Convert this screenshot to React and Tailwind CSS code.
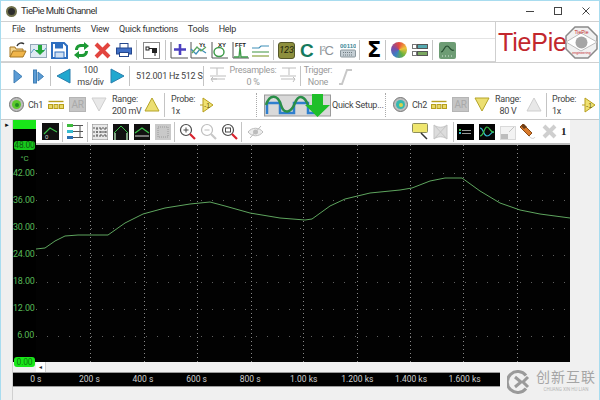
import React from 'react';

const FONT = "font-['Roboto','Liberation_Sans',sans-serif]";

function Sep({ ml = 'ml-1', h = 'h-[20px]' }) {
  return <div className={`${ml} ${h} w-px bg-[#c4c4c4] shrink-0`} />;
}

// small svg wrapper so the toolbar code stays readable
function Ico({ w = 18, h = 18, ml = 0, children, vb }) {
  return (
    <svg width={w} height={h} viewBox={vb || `0 0 ${w} ${h}`} className="shrink-0" style={{ marginLeft: ml }}>
      {children}
    </svg>
  );
}

function Tri({ dir = 'up', fill, stroke, w = 16, h = 15, ml = 0 }) {
  const pts = {
    up: `${w / 2},1 ${w - 1},${h - 1} 1,${h - 1}`,
    down: `1,1 ${w - 1},1 ${w / 2},${h - 1}`,
    left: `${w - 1},1 ${w - 1},${h - 1} 1,${h / 2}`,
    right: `1,1 ${w - 1},${h / 2} 1,${h - 1}`,
  }[dir];
  return (
    <Ico w={w} h={h} ml={ml}>
      <polygon points={pts} fill={fill} stroke={stroke} strokeWidth="1" />
    </Ico>
  );
}

function MainToolbar() {
  return (
    <div className="flex items-center h-[23px] pl-[8px] border-b border-[#d4d4d4]">
      {/* open */}
      <Ico w={18} h={18}>
        <path d="M1 16V6h5l1 2h7v2" fill="#f2d38c" stroke="#a5741f" />
        <path d="M1 16l3-6h13l-3 6z" fill="#f0b54a" stroke="#a5741f" />
        <path d="M8 5c1-3 5-4 7-2" fill="none" stroke="#333" strokeWidth="1.4" />
      </Ico>
      {/* save data */}
      <Ico w={17} h={17} ml={3}>
        <rect x="0.5" y="2.5" width="16" height="13" fill="#dfeaf2" stroke="#93a8b8" />
        <path d="M1 11l3-4 3 3 3-3 3 3 3-4" fill="none" stroke="#5aa0c8" />
        <path d="M8 3h4v5h3l-5 5-5-5h3z" fill="#25a83a" />
      </Ico>
      {/* floppy */}
      <Ico w={17} h={17} ml={4}>
        <path d="M1 1h12l3 3v12H1z" fill="#fff" stroke="#2f6fc0" strokeWidth="2" />
        <rect x="4" y="1.5" width="8" height="5" fill="#2f6fc0" />
        <rect x="4" y="10" width="9" height="6" fill="#cfe0f3" stroke="#2f6fc0" />
      </Ico>
      {/* refresh */}
      <Ico w={17} h={17} ml={5}>
        <path d="M2 8c0-4 3-6 6-6h3V0l5 4-5 4V5H8C6 5 5 6 5 8z" fill="#1d9a35" />
        <path d="M15 9c0 4-3 6-6 6H6v2l-5-4 5-4v3h3c2 0 3-1 3-3z" fill="#1d9a35" />
      </Ico>
      {/* delete */}
      <Ico w={17} h={17} ml={4}>
        <path d="M2 2l13 13M15 2L2 15" stroke="#e2453f" strokeWidth="4" />
      </Ico>
      {/* print */}
      <Ico w={16} h={16} ml={5}>
        <rect x="4" y="1.5" width="8" height="5" fill="#fff" stroke="#25478c" />
        <rect x="0.5" y="6" width="15" height="6" fill="#3f6fc6" stroke="#25478c" />
        <rect x="3.5" y="10.5" width="9" height="4" fill="#fff" stroke="#25478c" />
      </Ico>
      <Sep ml="ml-1" />
      {/* device */}
      <Ico w={17} h={17} ml={6}>
        <rect x="0.5" y="0.5" width="16" height="16" fill="#fff" stroke="#8a8a8a" />
        <rect x="3" y="5" width="3" height="3" fill="none" stroke="#222" />
        <rect x="9" y="6" width="5" height="5" fill="#222" />
        <path d="M6 6.5h3M12 11v3" stroke="#222" />
      </Ico>
      <Sep ml="ml-[5px]" />
      {/* add */}
      <Ico w={19} h={18} ml={4}>
        <path d="M1 1v16h17" fill="none" stroke="#555" />
        <path d="M10 3v11M4 8.500h12" stroke="#4b3fc0" strokeWidth="2.600" />
      </Ico>
      {/* Yt */}
      <Ico w={17} h={18} ml={1}>
        <path d="M1 1v16h16" fill="none" stroke="#555" />
        <path d="M1 8l5 5 4-5 6 4" fill="none" stroke="#3e8fb8" strokeWidth="1.300" />
        <path d="M2 12l5-6 4 4 5-4" fill="none" stroke="#5da55d" strokeWidth="1.300" />
        <text x="9" y="6" fontSize="6" fontWeight="700" fill="#222" fontFamily="Liberation Sans">Yt</text>
      </Ico>
      {/* XY */}
      <Ico w={17} h={18} ml={4}>
        <path d="M1 1v16h16" fill="none" stroke="#555" />
        <ellipse cx="8" cy="11" rx="5" ry="4.500" fill="none" stroke="#3c9a48" strokeWidth="1.400" />
        <text x="7" y="6" fontSize="6" fontWeight="700" fill="#222" fontFamily="Liberation Sans">XY</text>
      </Ico>
      {/* FFT */}
      <Ico w={17} h={18} ml={4}>
        <path d="M1 1v16h16" fill="none" stroke="#555" />
        <path d="M2 16h5l1-10 1 10h7" fill="none" stroke="#3c9a48" strokeWidth="1.300" />
        <text x="3" y="6" fontSize="6" fontWeight="700" fill="#222" fontFamily="Liberation Sans">FFT</text>
      </Ico>
      {/* bands */}
      <Ico w={17} h={18} ml={3}>
        <path d="M0 7h7l2-2h8" fill="none" stroke="#3e8fb8" strokeWidth="1.200" />
        <path d="M0 11h17" stroke="#5da55d" strokeWidth="1.200" />
        <path d="M0 15h17" stroke="#8aa33e" strokeWidth="1.200" />
      </Ico>
      <Sep ml="ml-1" />
      {/* 123 meter */}
      <div className="ml-1 w-[17px] h-[17px] rounded-[3px] bg-[#8d8f3d] border border-[#55572a] flex items-center justify-center text-[9px] italic leading-none text-[#20220c] shrink-0">123</div>
      {/* C */}
      <div className="ml-[5px] w-[11px] text-[19px] leading-none font-black text-[#157a5e] shrink-0 font-['Liberation_Sans',sans-serif]">C</div>
      {/* I2C */}
      <div className="ml-2 w-[17px] text-[13px] leading-none text-[#8e9499] shrink-0 font-['Liberation_Sans',sans-serif] whitespace-nowrap tracking-[-1px]">I<sup className="text-[7px]">2</sup>C</div>
      {/* bus */}
      <Ico w={16} h={17} ml={4}>
        <text x="0" y="6" fontSize="6" fontWeight="700" fill="#3a8a9a" fontFamily="Liberation Sans">00110</text>
        <rect x="0.5" y="8" width="15" height="7" rx="1" fill="#c4ced4" stroke="#8b979d" />
        <path d="M3 10.500h10M3 13h10" stroke="#6e7a80" strokeDasharray="1 1" />
      </Ico>
      <Sep ml="ml-[3px]" />
      <div className="ml-[7px] w-[16px] text-[21px] leading-none font-bold text-black shrink-0 font-['DejaVu_Sans',sans-serif]">Σ</div>
      <Sep ml="ml-[2px]" />
      {/* palette */}
      <div className="ml-[5px] w-[16px] h-[16px] rounded-full bg-[conic-gradient(#e6483d,#efc23a,#64b13f,#3a7fc4,#7b4ba8,#e6483d)] shrink-0" />
      {/* list */}
      <Ico w={16} h={14} ml={5}>
        <rect x="0.500" y="1.500" width="4" height="4" fill="#fff" stroke="#777" />
        <rect x="5.500" y="1.500" width="10" height="4" fill="#55a9b0" stroke="#555" />
        <rect x="0.500" y="8.500" width="4" height="4" fill="#fff" stroke="#777" />
        <rect x="5.500" y="8.500" width="10" height="4" fill="#7aa860" stroke="#555" />
      </Ico>
      <Sep ml="ml-1" />
      {/* green scope */}
      <Ico w={17} h={17} ml={6}>
        <rect width="17" height="17" rx="2" fill="#6d9c74" />
        <path d="M2 10c3 0 3-6 6-6s3 6 7 4" fill="none" stroke="#274f32" strokeWidth="1.200" />
        <path d="M3 14h1M6 14h1M9 14h1M12 14h1" stroke="#d8e8da" />
      </Ico>
    </div>
  );
}

function Logo() {
  return (
    <div className="w-[104px] h-[40px] border-l border-[#cfcfcf] flex items-center overflow-hidden shrink-0 font-['Liberation_Sans',sans-serif]">
      <span className="ml-[2px] text-[25px] leading-none tracking-[-0.2px] text-[#c2272d]">TiePie</span>
      <svg width="33" height="33" viewBox="0 0 33 33" className="shrink-0 -ml-[2px]">
        <polygon points="10,1 23,1 32,10 32,23 23,32 10,32 1,23 1,10" fill="#f1f1f1" stroke="#8a8a8a" strokeWidth="1.500" />
        <path d="M1 16L16 7l16 9-16 9z" fill="#fff" stroke="#bcbcbc" />
        <circle cx="16.500" cy="16.500" r="6" fill="#a5a5a5" />
        <text x="16.500" y="8" fontSize="5" fill="#c2272d" textAnchor="middle">TiePie</text>
        <text x="16.500" y="28" fontSize="3.500" fill="#c2272d" textAnchor="middle">engineering</text>
      </svg>
    </div>
  );
}

function TimebaseRow() {
  return (
    <div className="flex items-center h-[27px] pl-[12px] border-b border-[#d4d4d4] text-[9px] tracking-[-0.25px] leading-[12px] text-[#444] whitespace-nowrap">
      <Tri dir="right" fill="#5b9bd5" stroke="#3f7fb5" w={10} h={15} />
      <Ico w={11} h={15} ml={10}>
        <rect x="0.500" y="1" width="3" height="13" fill="#5b9bd5" stroke="#3f7fb5" />
        <polygon points="5,3 10.500,7.500 5,12" fill="#5b9bd5" stroke="#3f7fb5" />
      </Ico>
      <Sep ml="ml-[6px]" />
      <Tri dir="left" fill="#21a8cf" stroke="#2a7fae" w={15} h={16} ml={5} />
      <div className="w-[39px] text-center">100<br />ms/div</div>
      <Tri dir="right" fill="#21a8cf" stroke="#2a7fae" w={15} h={16} />
      <Sep ml="ml-1" />
      <span className="ml-[6px] w-[38px]">512.001 Hz</span>
      <span className="ml-[7px] w-[19px]">512 S</span>
      <Sep ml="ml-[3px]" />
      <Ico w={18} h={18} ml={5}>
        <path d="M1 1h14M8 1v7M1 9h16M8 12H2l2-2M2 12l2 3M2 12h14" fill="none" stroke="#bdbdbd" />
      </Ico>
      <div className="w-[52px] text-center text-[#9a9a9a]">Presamples:<br />0 %</div>
      <Ico w={18} h={18}>
        <path d="M3 1h14M10 1v7M1 9h16M16 12H2M16 12l-2-2M16 12l-2 3" fill="none" stroke="#bdbdbd" />
      </Ico>
      <Sep ml="ml-[3px]" />
      <div className="w-[34px] text-center text-[#9a9a9a]">Trigger:<br />None</div>
      <Ico w={15} h={17} ml={3}>
        <path d="M1 16h3L9 2h5" fill="none" stroke="#c8c8c8" strokeWidth="2" />
      </Ico>
    </div>
  );
}

function Led({ core, ring, ml = 0 }) {
  return (
    <div className="w-[15px] h-[15px] rounded-full flex items-center justify-center shrink-0 border border-[#777] bg-[#bdbdbd]" style={{ marginLeft: ml }}>
      <div className="w-[9px] h-[9px] rounded-full flex items-center justify-center" style={{ background: ring }}>
        <div className="w-[4px] h-[4px] rounded-full" style={{ background: core }} />
      </div>
    </div>
  );
}

function Coupling({ ml }) {
  return (
    <Ico w={16} h={9} ml={ml}>
      <path d="M0.500 1.500h15" stroke="#b79f1e" strokeWidth="1.400" />
      <rect x="0.500" y="4.500" width="4" height="4" fill="#e9d865" stroke="#b79f1e" />
      <rect x="6" y="4.500" width="4" height="4" fill="#e9d865" stroke="#b79f1e" />
      <rect x="11.500" y="4.500" width="4" height="4" fill="#e9d865" stroke="#b79f1e" />
    </Ico>
  );
}

function Ar({ ml }) {
  return <div className="w-[17px] h-[15px] bg-[#c5c5c5] border border-[#b5b5b5] text-[#a9a9a9] text-[10px] leading-[13px] text-center shrink-0" style={{ marginLeft: ml }}>AR</div>;
}

function ProbeIcon({ ml }) {
  return (
    <Ico w={16} h={16} ml={ml}>
      <path d="M1 8h3M4 1l10 7-10 7z" fill="#efe171" stroke="#b79f1e" />
      <text x="5" y="10.500" fontSize="7" letterSpacing="0" fill="#6a5c10" fontFamily="Liberation Sans">-1</text>
    </Ico>
  );
}

function ChannelRow() {
  return (
    <div className="flex items-center h-[30px] pl-[8px] border-b border-[#c9c9c9] text-[9px] tracking-[-0.25px] leading-[12px] text-[#444] whitespace-nowrap">
      <Led ring="#5cc82c" core="#1f8c22" />
      <span className="ml-1 w-[15px]">Ch1</span>
      <Coupling ml={5} />
      <Ar ml={5} />
      <Tri dir="down" fill="#e8e8e8" stroke="#cfcfcf" w={16} h={15} ml={5} />
      <div className="ml-[5px] w-[27px]">Range:<br />200 mV</div>
      <Tri dir="up" fill="#ecdf72" stroke="#b5a428" w={16} h={15} ml={5} />
      <Sep ml="ml-1" h="h-[24px]" />
      <div className="ml-[6px] w-[23px]">Probe:<br />1x</div>
      <ProbeIcon ml={5} />
      <div className="ml-[41px] h-[24px] w-px border-l border-dotted border-[#aaa]" />
      {/* quick setup */}
      <Ico w={67} h={24} ml={7}>
        <rect x="0.500" y="2" width="66" height="21" fill="#d9d9d9" stroke="#9a9a9a" />
        <path d="M3 21V10h13V20h14V10h14v10h12" fill="none" stroke="#2f7fce" strokeWidth="2.500" />
        <path d="M2 12c4-12 12-10 15 0s10 8 14-2 10-6 13 2" fill="none" stroke="#2a8f48" strokeWidth="2.500" />
        <path d="M48 1h11v11h7L53.500 24 41 12h7z" fill="#1fbf2a" />
      </Ico>
      <span className="ml-[1px] w-[50px]">Quick Setup...</span>
      <div className="ml-[3px] h-[24px] w-px border-l border-dotted border-[#aaa]" />
      <Led ring="#35b8b0" core="#d7d24a" ml={7} />
      <span className="ml-1 w-[14px]">Ch2</span>
      <Coupling ml={5} />
      <Ar ml={5} />
      <Tri dir="down" fill="#ecdf72" stroke="#b5a428" w={16} h={15} ml={5} />
      <div className="ml-[5px] w-[26px] text-center">Range:<br />80 V</div>
      <Tri dir="up" fill="#e8e8e8" stroke="#cfcfcf" w={16} h={15} ml={5} />
      <Sep ml="ml-1" h="h-[24px]" />
      <div className="ml-[5px] w-[23px]">Probe:<br />1x</div>
      <ProbeIcon ml={6} />
    </div>
  );
}

function ScopeLeftTools() {
  return (
    <div className="flex items-center">
      <Ico w={17} h={17} ml={6}>
        <rect width="17" height="17" fill="#111" />
        <path d="M2 11l6-6 7 4" fill="none" stroke="#3cc24a" strokeWidth="1.200" />
        <text x="3" y="15.500" fontSize="6" fill="#ddd" fontFamily="Liberation Sans">0</text>
      </Ico>
      <Sep ml="ml-[3px]" />
      <Ico w={17} h={17} ml={4}>
        <rect x="0" y="1" width="6" height="3" fill="#3dbb3d" />
        <rect x="0" y="7" width="6" height="3" fill="#36bcd0" />
        <rect x="0" y="13" width="6" height="3" fill="#2a6fb0" />
        <path d="M6 2.500h10M6 8.500h10M6 14.500h10M13 2v13" stroke="#555" />
      </Ico>
      <Sep ml="ml-[3px]" />
      <Ico w={16} h={16} ml={4}>
        <rect width="16" height="16" fill="#e8e8e8" stroke="#888" />
        <path d="M1 4h14M1 8h14M1 12h14M5 4v8M9 4v8M13 4v8" stroke="#555" strokeDasharray="2 1" />
      </Ico>
      <Ico w={16} h={16} ml={5}>
        <rect width="16" height="16" fill="#111" />
        <path d="M1 9l7-7 7 7M2 9v7M14 9v7" fill="none" stroke="#3cc24a" />
        <path d="M2 9v7M14 9v7" stroke="#ddd" />
      </Ico>
      <Ico w={16} h={16} ml={5}>
        <rect width="16" height="16" fill="#111" />
        <path d="M1 9l7-5 7 5" fill="none" stroke="#3cc24a" strokeWidth="1.300" />
        <path d="M1 12h14" stroke="#ddd" />
      </Ico>
      <Ico w={16} h={16} ml={5}>
        <rect width="16" height="16" fill="#c9c9c9" />
        <rect x="3" y="3" width="10" height="10" fill="none" stroke="#9a9a9a" strokeDasharray="1 1" />
      </Ico>
      <Sep ml="ml-[3px]" />
      <Magnifier ml={4} sign="plus" />
      <Magnifier ml={4} sign="minus" muted />
      <Magnifier ml={4} sign="fit" />
      <Sep ml="ml-[3px]" />
      <Ico w={17} h={17} ml={5}>
        <path d="M1 9c4-5 11-5 15 0-4 5-11 5-15 0z" fill="#ececec" stroke="#bcbcbc" />
        <circle cx="8.500" cy="9" r="2.500" fill="#bcbcbc" />
        <path d="M3 15L14 3" stroke="#bcbcbc" />
      </Ico>
    </div>
  );
}

function Magnifier({ ml, sign, muted }) {
  const c = muted ? '#bdbdbd' : '#4a4a4a';
  return (
    <Ico w={17} h={17} ml={ml}>
      <circle cx="7" cy="7" r="5.500" fill="#fff" stroke={c} strokeWidth="1.200" />
      <path d="M11 11l5 5" stroke={muted ? '#c8c8c8' : '#d9232e'} strokeWidth="2.200" />
      {sign === 'plus' && <path d="M4.500 7h5M7 4.500v5" stroke={c} />}
      {sign === 'minus' && <path d="M4.500 7h5" stroke={c} />}
      {sign === 'fit' && <rect x="4.500" y="5" width="5" height="4" fill="none" stroke={c} />}
    </Ico>
  );
}

function ScopeRightTools() {
  return (
    <div className="flex items-center">
      <Ico w={16} h={17}>
        <rect x="0.500" y="0.500" width="15" height="9" rx="1" fill="#efe66e" stroke="#8d8d5a" />
        <path d="M9 10l6 6" stroke="#333" strokeWidth="1.500" />
      </Ico>
      <Ico w={15} h={16} ml={5}>
        <path d="M1 1c4 3 9 3 13 0v14c-4-3-9-3-13 0z" fill="#dcdcdc" stroke="#c5c5c5" />
        <path d="M1 1l13 14M14 1L1 15" stroke="#c5c5c5" />
      </Ico>
      <Sep ml="ml-[5px]" />
      <div className="ml-[3px] w-[17px] h-[16px] bg-black flex flex-col justify-center pl-[2px] gap-[1px]">
        <div className="flex items-center gap-[1px]"><div className="w-[2px] h-[2px] bg-[#3cc24a]" /><div className="w-[9px] h-px bg-[#999]" /></div>
        <div className="flex items-center gap-[1px]"><div className="w-[2px] h-[2px] bg-[#36bcd0]" /><div className="w-[9px] h-px bg-[#999]" /></div>
      </div>
      <Ico w={16} h={16} ml={5}>
        <rect width="16" height="16" fill="#060606" />
        <path d="M1 4c4 0 3 8 7 8s3-4 7-4" fill="none" stroke="#36bcd0" strokeWidth="1.200" />
        <path d="M1 12c4 0 4-9 7-9s3 6 7 5" fill="none" stroke="#3cc24a" strokeWidth="1.200" />
      </Ico>
      <Ico w={16} h={16} ml={5}>
        <rect x="0.500" y="2.500" width="15" height="13" fill="#f3f3f3" stroke="#dadada" />
        <rect x="1" y="10" width="7" height="5" fill="#bdbdbd" />
        <path d="M9 8l5-5" stroke="#c5c5c5" />
      </Ico>
      <Ico w={16} h={17} ml={4}>
        <path d="M3 1l9 9-3 3-9-9z" fill="#d87a2c" stroke="#8b4b17" />
        <path d="M1 3l3-2 3 3-3 2z" fill="#6b3d16" />
        <path d="M9 13c2 3 5 3 6 1" fill="none" stroke="#cfcfcf" />
      </Ico>
      <Ico w={15} h={15} ml={6}>
        <path d="M2 2l11 11M13 2L2 13" stroke="#cfcfcf" strokeWidth="4" />
      </Ico>
      <span className="ml-1 mr-[4px] w-[5px] text-[11px] font-bold leading-none text-[#222] font-['Liberation_Serif',serif]">1</span>
    </div>
  );
}

const CURVE = [
  [0, 104], [9, 103], [19, 96], [29, 91], [42, 90], [72, 90], [89, 78], [107, 69], [129, 63], [154, 59],
  [174, 57], [189, 61], [214, 68], [244, 73], [269, 75], [276, 74], [294, 61], [309, 54], [334, 48], [364, 45],
  [376, 43], [394, 36], [409, 33], [426, 33], [444, 46], [464, 58], [484, 65], [504, 69], [534, 73],
];

function Plot() {
  const vx = [54, 108, 161, 215, 267, 321, 374, 427, 481];
  const hy = [28, 55, 83, 110, 137, 164, 191];
  return (
    <svg width="534" height="217" viewBox="0 0 534 217" className="block bg-[#020202]">
      {vx.map(x => <line key={x} x1={x + 0.5} x2={x + 0.5} y1="0" y2="217" stroke="#8a8a8a" strokeDasharray="1 3" />)}
      {hy.map(y => <line key={y} x1="0" x2="534" y1={y + 0.5} y2={y + 0.5} stroke="#5f5f5f" strokeDasharray="1 10" />)}
      <polyline points={CURVE.map(p => p.join(',')).join(' ')} fill="none" stroke="#5ea55e" strokeWidth="1" />
    </svg>
  );
}

const Y_LABELS = ['42.00', '36.00', '30.00', '24.00', '18.00', '12.00', '6.00'];
const X_LABELS = ['0 s', '200 s', '400 s', '600 s', '800 s', '1.00 ks', '1.200 ks', '1.400 ks', '1.600 ks'];

function Scope() {
  return (
    <div className="flex flex-1 min-h-0 bg-[#f0f0f0]">
      {/* splitter gutter */}
      <div className="w-[12px] shrink-0 pl-[2px] pt-[2px] border-r border-[#d0d0d0] bg-[#efefef]">
        <div className="text-[6px] leading-none text-[#111] pl-[1px]">►</div>
      </div>
      <div className="flex-1 flex flex-col min-w-0">
        <div className="flex">
          {/* vertical scale */}
          <div className="w-[23px] h-[242px] bg-black flex flex-col items-center text-[9px] tracking-[-0.2px] leading-none text-[#57b957] shrink-0">
            <div className="w-full h-[9px] bg-[#19e619] shrink-0" />
            <div className="mt-[12px] w-[21px] h-[9px] rounded-[3px] bg-[#17c91c] text-[#0d5c10] text-center text-[8.500px]">48.00</div>
            <div className="mt-[5px] h-[9px] text-[8px]">°C</div>
            {Y_LABELS.map((l, i) => (
              <div key={l} className={`${i === 0 ? 'mt-[6px]' : 'mt-[18px]'} h-[9px] w-full pr-[2px] text-right`}>{l}</div>
            ))}
            <div className="mt-[17px] w-[21px] h-[10px] rounded-[3px] bg-[#19e619] text-[#0f7a12] text-center text-[8.500px] leading-[10px]">0.00</div>
          </div>
          <div className="w-[534px] shrink-0 flex flex-col">
            <div className="h-[25px] bg-white border-b-2 border-[#bdbdbd] flex items-center justify-between">
              <ScopeLeftTools />
              <ScopeRightTools />
            </div>
            <Plot />
          </div>
        </div>
        {/* horizontal scrollbar under the plot */}
        <div className="ml-[23px] w-[534px] h-[10px] bg-[#f0f0f0] flex shrink-0">
          <div className="w-[10px] h-[10px] bg-white border-r border-[#cfcfcf] flex items-center justify-center text-[5px] leading-none text-[#222]">◄</div>
        </div>
        {/* time axis */}
        <div className="w-[487px] h-[15px] bg-black border-y border-[#9a9a9a] flex text-[8.500px] leading-[13px] text-[#cfcfcf] whitespace-nowrap overflow-hidden shrink-0">
          <div className="-ml-[4px] flex">
            {X_LABELS.map(l => <div key={l} className="w-[53.600px] text-center shrink-0">{l}</div>)}
          </div>
        </div>
      </div>
    </div>
  );
}

export default function App() {
  return (
    <div className={`relative w-[600px] h-[400px] overflow-hidden flex flex-col bg-white border-x border-t border-[#a8dcef] ${FONT}`}>
      {/* title bar */}
      <div className="flex items-center h-[20px] pl-[5px] text-[9.500px] tracking-[-0.55px] text-[#333] shrink-0">
        <div className="w-[11px] h-[11px] rounded-full bg-[#2d2d2d] border-2 border-[#6f6f4a]" />
        <span className="ml-[4px]">TiePie Multi Channel</span>
        <div className="ml-auto flex items-center gap-[20px] pr-[9px] text-[#333]">
          <div className="w-[8px] h-px bg-[#444]" />
          <div className="w-[8px] h-[8px] border border-[#444]" />
          <svg width="8" height="8" viewBox="0 0 8 8"><path d="M0.500 0.500l7 7M7.500 0.500l-7 7" stroke="#444" /></svg>
        </div>
      </div>
      <div className="flex border-t border-[#d0d0d0] border-b shrink-0">
        <div className="flex-1 min-w-0">
          <div className="flex items-center h-[17px] pl-[11px] gap-[10px] text-[9px] tracking-[-0.25px] text-[#333] border-b border-[#e4e4e4]">
            <span>File</span>
            <span>Instruments</span>
            <span>View</span>
            <span>Quick functions</span>
            <span>Tools</span>
            <span>Help</span>
          </div>
          <MainToolbar />
        </div>
        <Logo />
      </div>
      <TimebaseRow />
      <ChannelRow />
      <Scope />
      {/* watermark sits over the bottom corner of the window */}
      <div className="absolute right-0 bottom-0 w-[95px] h-[36px] bg-[#f0f0f0] flex items-center pl-[3px]">
        <svg width="24" height="24" viewBox="0 0 24 24" className="shrink-0">
          <path d="M19 5.500A10.500 10.500 0 1 0 19 18.500" fill="none" stroke="#9a9a9a" strokeWidth="3" />
          <path d="M8 7l6 5-6 5M21 7l-5 5 5 5" fill="none" stroke="#9a9a9a" strokeWidth="3" />
        </svg>
        <div className="ml-[5px] -mt-[3px] flex flex-col items-center">
          <span className="text-[14px] leading-[15px] tracking-[1px] text-[#a5a5a5] font-['Noto_Sans_CJK_SC',sans-serif]">创新互联</span>
          <span className="mt-[3px] text-[4.500px] leading-[6px] text-[#b5b5b5] whitespace-nowrap">CHUANG XIN HU LIAN</span>
        </div>
      </div>
    </div>
  );
}
